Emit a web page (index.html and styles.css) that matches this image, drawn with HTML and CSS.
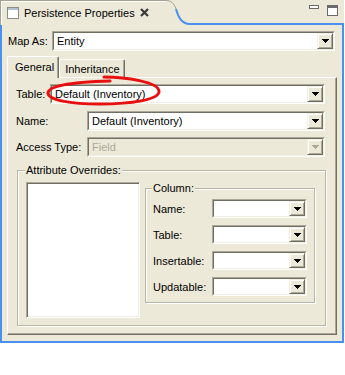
FILE: index.html
```html
<!DOCTYPE html>
<html lang="en">
<head>
  <meta charset="UTF-8" />
  <title>Persistence Properties</title>
  <link rel="stylesheet" href="styles.css">
</head>
<body>
  <div class="view">
    <!-- view tab -->
    <div class="view-head">
      <div class="view-tab">
        <svg class="view-icon" width="12" height="12" viewBox="0 0 12 12">
          <rect x="0.5" y="0.5" width="11" height="11" fill="#fff" stroke="#8d8c86"/>
          <rect x="1" y="1" width="10" height="2" fill="#b4bfcf"/>
        </svg>
        <span class="view-title">Persistence Properties</span>
        <svg class="view-close" width="9" height="9" viewBox="0 0 9 9">
          <path d="M1 1L8 8M8 1L1 8" stroke="#3a3a3a" stroke-width="2.2"/>
        </svg>
      </div>
      <svg class="tab-curve" width="24" height="25" viewBox="0 0 24 25">
        <path d="M0 0.5C5 0.5 8 3 10 9" fill="none" stroke="#a5a293"/>
        <path d="M10 9C12 16 15 24 24 24" fill="none" stroke="#4a90f0" stroke-width="2"/>
      </svg>
      <div class="view-tools">
        <svg width="10" height="4" viewBox="0 0 10 4"><rect x="0.5" y="0.5" width="9" height="3" fill="#fff" stroke="#6b6b6b"/></svg>
        <svg width="11" height="11" viewBox="0 0 11 11"><rect x="0.5" y="0.5" width="10" height="10" fill="#fff" stroke="#6b6b6b"/><rect x="1" y="1" width="9" height="2" fill="#6b6b6b"/></svg>
      </div>
    </div>

    <div class="view-body">
      <div class="map-row">
        <span class="lbl-map">Map As:</span>
        <div class="combo">
          <div class="combo-in">
            <span class="combo-text">Entity</span>
            <span class="combo-btn"><svg width="7" height="4" viewBox="0 0 7 4" shape-rendering="crispEdges"><path d="M0 0h7v1H0zM1 1h5v1H1zM2 2h3v1H2zM3 3h1v1H3z"/></svg></span>
          </div>
        </div>
      </div>

      <div class="folder">
        <div class="tabs">
          <div class="tab on">General</div>
          <div class="tab off">Inheritance</div>
        </div>
        <div class="panel">
          <div class="row">
            <span class="lbl">Table:</span>
            <div class="combo">
              <div class="combo-in">
                <span class="combo-text">Default (Inventory)</span>
                <span class="combo-btn"><svg width="7" height="4" viewBox="0 0 7 4" shape-rendering="crispEdges"><path d="M0 0h7v1H0zM1 1h5v1H1zM2 2h3v1H2zM3 3h1v1H3z"/></svg></span>
              </div>
            </div>
          </div>
          <div class="row row-name">
            <span class="lbl lbl-wide">Name:</span>
            <div class="combo">
              <div class="combo-in">
                <span class="combo-text">Default (Inventory)</span>
                <span class="combo-btn"><svg width="7" height="4" viewBox="0 0 7 4" shape-rendering="crispEdges"><path d="M0 0h7v1H0zM1 1h5v1H1zM2 2h3v1H2zM3 3h1v1H3z"/></svg></span>
              </div>
            </div>
          </div>
          <div class="row row-access">
            <span class="lbl lbl-wide">Access Type:</span>
            <div class="combo disabled">
              <div class="combo-in">
                <span class="combo-text">Field</span>
                <span class="combo-btn"><svg width="7" height="4" viewBox="0 0 7 4" shape-rendering="crispEdges"><path d="M0 0h7v1H0zM1 1h5v1H1zM2 2h3v1H2zM3 3h1v1H3z"/></svg></span>
              </div>
            </div>
          </div>

          <fieldset class="group attr-group">
            <legend>Attribute Overrides:</legend>
            <div class="attr-inner">
              <div class="list"></div>
              <fieldset class="group col-group">
                <legend>Column:</legend>
                <div class="col-grid">
                  <span>Name:</span>
                  <div class="combo sm"><div class="combo-in"><span class="combo-text"></span><span class="combo-btn"><svg width="7" height="4" viewBox="0 0 7 4" shape-rendering="crispEdges"><path d="M0 0h7v1H0zM1 1h5v1H1zM2 2h3v1H2zM3 3h1v1H3z"/></svg></span></div></div>
                  <span>Table:</span>
                  <div class="combo sm"><div class="combo-in"><span class="combo-text"></span><span class="combo-btn"><svg width="7" height="4" viewBox="0 0 7 4" shape-rendering="crispEdges"><path d="M0 0h7v1H0zM1 1h5v1H1zM2 2h3v1H2zM3 3h1v1H3z"/></svg></span></div></div>
                  <span>Insertable:</span>
                  <div class="combo sm"><div class="combo-in"><span class="combo-text"></span><span class="combo-btn"><svg width="7" height="4" viewBox="0 0 7 4" shape-rendering="crispEdges"><path d="M0 0h7v1H0zM1 1h5v1H1zM2 2h3v1H2zM3 3h1v1H3z"/></svg></span></div></div>
                  <span>Updatable:</span>
                  <div class="combo sm"><div class="combo-in"><span class="combo-text"></span><span class="combo-btn"><svg width="7" height="4" viewBox="0 0 7 4" shape-rendering="crispEdges"><path d="M0 0h7v1H0zM1 1h5v1H1zM2 2h3v1H2zM3 3h1v1H3z"/></svg></span></div></div>
                </div>
              </fieldset>
            </div>
          </fieldset>
        </div>
      </div>
    </div>

    <!-- red hand-drawn mark -->
    <svg class="mark" width="344" height="343" viewBox="0 0 344 343">
      <path d="M104 77C126 77 158 82 159 91C160 100 130 104 100 104C70 104 48 100 48 93C48 86 70 82 110 81" fill="none" stroke="#e8100f" stroke-width="3" stroke-linecap="round"/>
    </svg>
  </div>
</body>
</html>
```

FILE: styles.css
```css
* {
  box-sizing: border-box;
}

html, body {
  margin: 0;
  padding: 0;
  background: #fff;
  font-family: "Liberation Sans", Arial, sans-serif;
  font-size: 11px;
  color: #000;
}

.view {
  position: relative;
  width: 344px;
  height: 343px;
  background: #ece9d8;
  display: flex;
  flex-direction: column;
}

/* view tab */
.view-head {
  display: flex;
  height: 25px;
  flex: none;
}

.view-tab {
  width: 166px;
  display: flex;
  align-items: center;
  padding: 0 17px 1px 6px;
  border-top: 1px solid #a5a293;
  border-left: 1px solid #a5a293;
  box-shadow: inset 1px 1px 0 #fff;
}

.view-icon { flex: none; }
.view-title { margin-left: 5px; white-space: nowrap; }
.view-close { margin-left: auto; flex: none; }

.tab-curve {
  flex: none;
  display: block;
}

.view-tools {
  flex: 1;
  border-bottom: 2px solid #4a90f0;
  display: flex;
  justify-content: flex-end;
  align-items: flex-start;
  gap: 8px;
  padding: 5px 6px 0 0;
}

.view-tools svg { display: block; }

.view-body {
  flex: 1;
  display: flex;
  flex-direction: column;
  border: 2px solid #4a90f0;
  border-top: 0;
  padding: 6px 5px;
}

.map-row {
  display: flex;
  align-items: center;
  padding: 0 2px 0 1px;
}

.lbl-map { width: 44px; flex: none; }

/* combo box */
.combo {
  flex: 1;
  height: 20px;
  display: flex;
  border: 1px solid;
  border-color: #aca899 #fff #fff #aca899;
}

.combo.sm { height: 19px; }

.combo-in {
  flex: 1;
  display: flex;
  align-items: center;
  border: 1px solid;
  border-color: #716f64 #f1efe2 #f1efe2 #716f64;
  background: #fff;
  min-width: 0;
}

.combo-text {
  flex: 1;
  padding-left: 3px;
  white-space: nowrap;
  overflow: hidden;
}

.combo-btn {
  flex: none;
  width: 16px;
  align-self: stretch;
  display: flex;
  align-items: center;
  justify-content: center;
  background: #ece9d8;
  border: 1px solid;
  border-color: #f1efe2 #716f64 #716f64 #f1efe2;
  box-shadow: inset 1px 1px 0 #fff, inset -1px -1px 0 #aca899;
}

.combo-btn svg { display: block; fill: #000; }

.combo.disabled .combo-in { background: #ece9d8; }
.combo.disabled .combo-text { color: #aca899; }
.combo.disabled .combo-btn svg { fill: #aca899; }

/* tab folder */
.folder {
  flex: 1;
  display: flex;
  flex-direction: column;
  margin-top: 5px;
}

.tabs {
  display: flex;
  align-items: flex-end;
  height: 21px;
  flex: none;
}

.tab {
  display: flex;
  align-items: center;
  border: 1px solid;
  border-bottom: 0;
  border-color: #fff #716f64 #716f64 #fff;
  box-shadow: inset -1px 0 0 #aca899;
  border-radius: 2px 2px 0 0;
  background: #ece9d8;
  white-space: nowrap;
}

.tab.on {
  height: 22px;
  margin-bottom: -1px;
  position: relative;
  z-index: 1;
  padding: 0 4px 1px 7px;
}

.tab.off {
  height: 18px;
  padding: 0 4px 0 5px;
}

.panel {
  flex: 1;
  border: 1px solid;
  border-color: #fff #716f64 #716f64 #fff;
  box-shadow: inset -1px -1px 0 #aca899;
  padding: 6px 11px 8px 8px;
}

.row {
  display: flex;
  align-items: center;
}

.row-name { margin-top: 7px; }
.row-access { margin-top: 6px; }

.lbl { width: 34px; flex: none; }
.lbl-wide { width: 71px; }

/* group boxes */
.group {
  margin: 0;
  min-width: 0;
  border: 1px solid #b9b6a6;
  box-shadow: inset 1px 1px 0 #fff, 1px 1px 0 #fff;
}

.group legend {
  padding: 0 1px;
  margin-left: -1px;
  line-height: 13px;
  background: #ece9d8;
}

.attr-group {
  margin: 7px -1px 0 1px;
  padding: 5px 10px 7px 8px;
}

.attr-inner {
  display: flex;
  align-items: flex-start;
  gap: 5px;
}

.list {
  width: 114px;
  height: 136px;
  flex: none;
  background: #fff;
  border: 1px solid;
  border-color: #aca899 #fff #fff #aca899;
  box-shadow: inset 1px 1px 0 #716f64, inset -1px -1px 0 #f1efe2;
}

.col-group {
  flex: 1;
  padding: 4px 8px 6px 7px;
}

.col-grid {
  display: grid;
  grid-template-columns: 59px 95px;
  row-gap: 7px;
  align-items: center;
}

.mark {
  position: absolute;
  left: 0;
  top: 0;
  pointer-events: none;
}
```
